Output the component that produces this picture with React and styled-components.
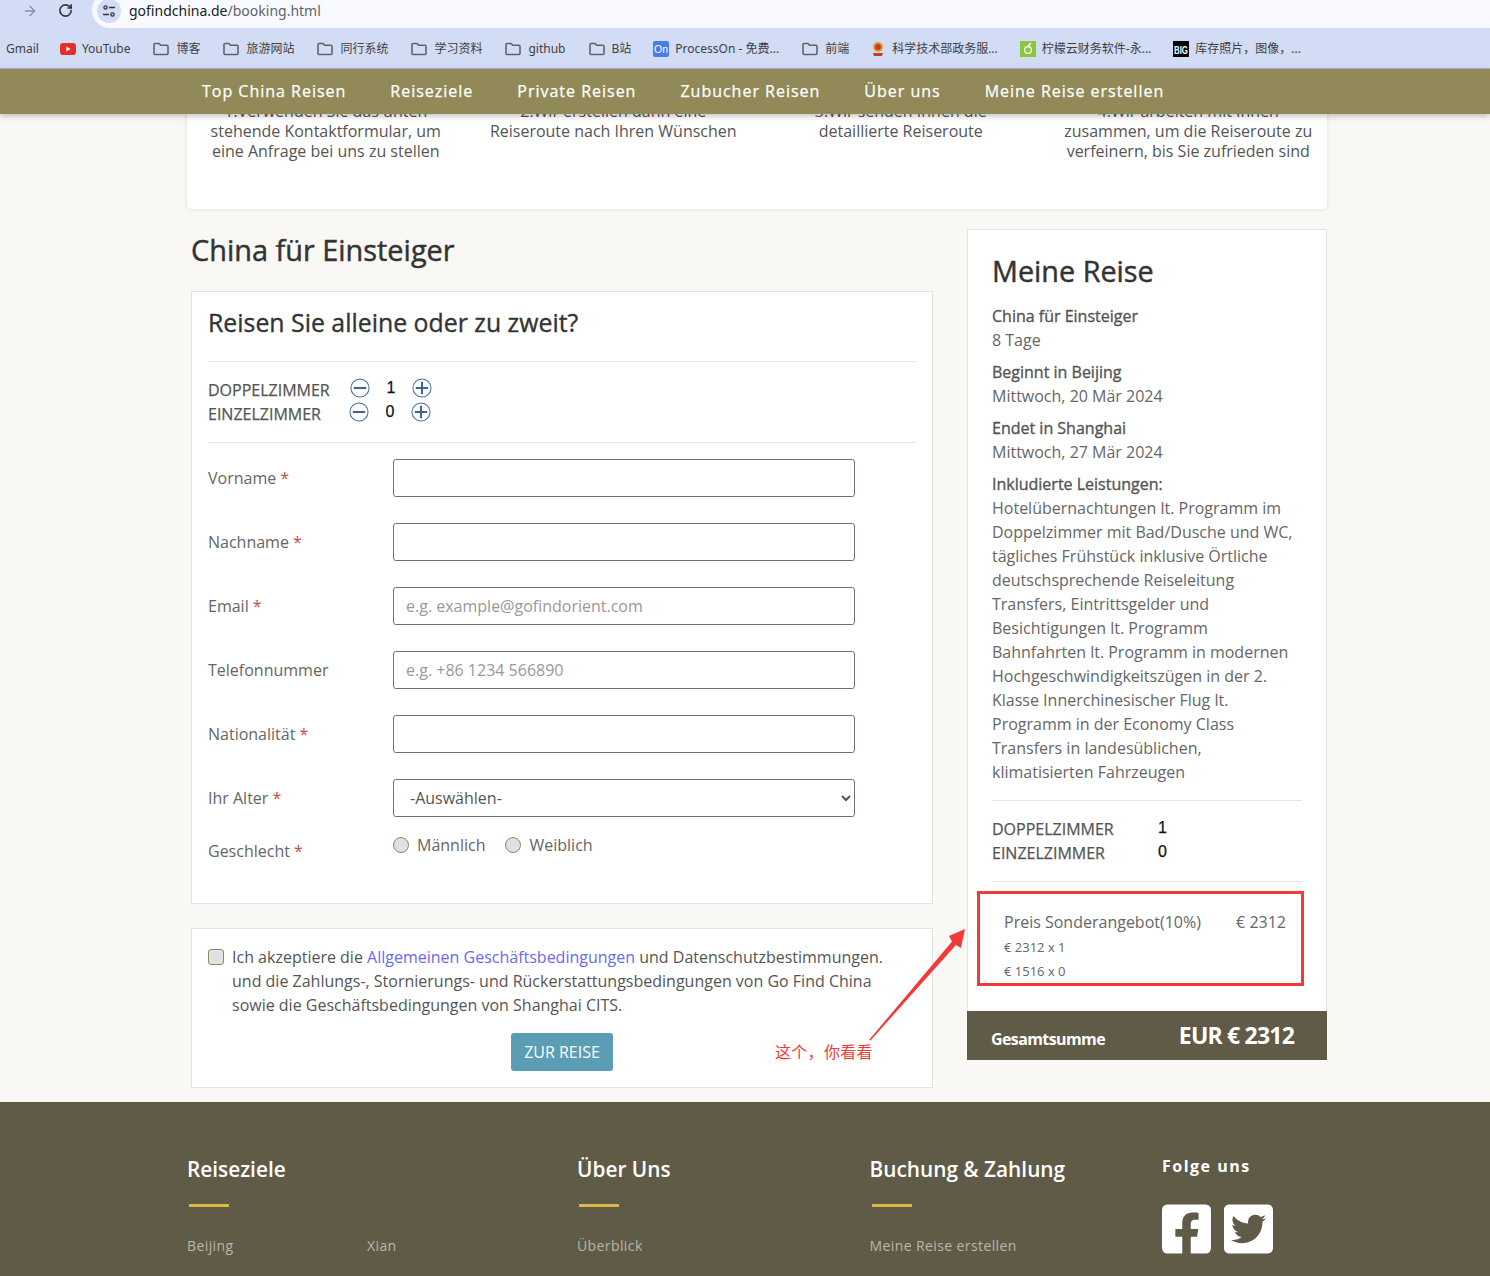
import React from "react";
import styled, { createGlobalStyle } from "styled-components";
import { ArrowRight, RotateCw } from "lucide-react";
import { FaFacebookSquare, FaTwitterSquare } from "react-icons/fa";

const GlobalStyle = createGlobalStyle`
  html, body { margin: 0; padding: 0; background: #f9f8f4; }
  body { font-family: "Open Sans", "Noto Sans CJK SC", sans-serif; color: #555; }
  #root { height: 1276px; overflow: hidden; position: relative; }
  * { box-sizing: border-box; }
`;

const AddressBar = styled.div`
  height: 28px;
  background: #d3dcf5;
  display: flex;
  align-items: flex-start;
  padding-left: 22px;
  gap: 20px;
  svg { flex: none; }
  > svg { margin-top: 3px; }
`;
const UrlPill = styled.div`
  flex: 1;
  height: 36px;
  margin: -8px 0 0 -1px;
  padding: 9px 0 0 37px;
  position: relative;
  background: #f8faff;
  border-radius: 18px 0 0 18px;
  font: 14px/20px "Noto Sans", sans-serif;
  color: #202124;
  span { color: #5f6368; }
`;
const TuneBadge = styled.div`
  position: absolute;
  left: 5px;
  top: 7px;
  width: 24px;
  height: 24px;
  border-radius: 50%;
  background: #d3dcf5;
  display: flex;
  align-items: center;
  justify-content: center;
`;
const BookmarkBar = styled.div`
  height: 41px;
  background: #d3dcf5;
  border-bottom: 1px solid #aeb5cb;
  display: flex;
  align-items: center;
  gap: 22px;
  padding: 2px 0 0 6px;
  font: 12px/16px "Noto Sans", "Noto Sans CJK SC", sans-serif;
  color: #3c4043;
`;
const Bookmark = styled.div`
  display: flex;
  align-items: center;
  gap: ${(p) => p.$gap || 6}px;
  margin-right: ${(p) => p.$trim || 0}px;
  white-space: nowrap;
`;
const NavBar = styled.nav`
  position: relative;
  z-index: 5;
  height: 45px;
  background: #918a58;
  box-shadow: 0 2px 6px rgba(0, 0, 0, 0.25);
  display: flex;
  align-items: center;
  gap: 44px;
  padding: 0 0 2px 202px;
`;
const NavItem = styled.a`
  color: #fff;
  font-size: 16px;
  letter-spacing: 0.99px;
  -webkit-text-stroke: 0.25px #fff;
`;
const Container = styled.div`
  width: 1140px;
  margin-left: 187px;
`;
const StepsCard = styled.section`
  height: 95px;
  background: #fff;
  border-radius: 0 0 5px 5px;
  box-shadow: 0 0 4px rgba(0, 0, 0, 0.12);
  overflow: hidden;
  display: grid;
  grid-template-columns: repeat(4, 287.5px);
  justify-content: center;
`;
const Step = styled.p`
  margin: -13px auto 0;
  width: 250px;
  text-align: center;
  font-size: 16px;
  line-height: 20px;
  color: #555;
`;
const Columns = styled.div`
  display: flex;
  align-items: flex-start;
  margin-top: 20px;
  padding-left: 4px;
  gap: 34px;
`;
const LeftColumn = styled.div`
  width: 742px;
`;
const PageTitle = styled.h1`
  margin: 0;
  height: 62px;
  font-size: 28.9px;
  line-height: 42px;
  font-weight: 400;
  -webkit-text-stroke: 0.45px #333;
  color: #333;
`;
const Card = styled.section`
  background: #fff;
  border: 1px solid #e3e3e3;
  padding: ${(p) => p.$padding};
  margin-bottom: ${(p) => p.$bottom || 0}px;
  height: ${(p) => p.$height}px;
`;
const CardTitle = styled.h2`
  margin: 0;
  height: 56px;
  font-size: 24.85px;
  line-height: 34px;
  font-weight: 400;
  -webkit-text-stroke: 0.35px #333;
  color: #333;
`;
const Rule = styled.hr`
  border: 0;
  border-top: 1px solid #e6e6e6;
  margin: ${(p) => p.$top || 0}px 0 0;
`;
const RoomList = styled.div`
  padding: 14px 0 18px;
`;
const RoomRow = styled.div`
  height: 24px;
  display: flex;
  align-items: center;
`;
const RoomLabel = styled.span`
  width: ${(p) => p.$width}px;
  font-size: 16px;
  -webkit-text-stroke: 0.25px #555;
  color: #555;
  padding-top: 4px;
`;
const RoomCount = styled.span`
  width: 42px;
  text-align: center;
  font: 16px "Liberation Sans", sans-serif;
  -webkit-text-stroke: 0.25px #111;
  color: #111;
`;
const Field = styled.div`
  display: flex;
  align-items: ${(p) => (p.$top ? "flex-start" : "center")};
  height: ${(p) => p.$height || 38}px;
  margin-top: ${(p) => p.$first || 0}px;
  margin-bottom: ${(p) => p.$bottom ?? 26}px;
`;
const FieldLabel = styled.label`
  width: 185px;
  flex: none;
  font-size: 16px;
  color: #666;
  padding-top: ${(p) => p.$pad || 0}px;
  em { color: #c0504d; font-style: normal; }
`;
const TextInput = styled.input`
  width: 462px;
  height: 38px;
  border: 1px solid #6c757d;
  border-radius: 3px;
  padding: 0 12px;
  font: 16px "Open Sans", sans-serif;
  background: #fff;
  &::placeholder { color: #999; opacity: 1; }
`;
const AgeSelect = styled.select`
  width: 462px;
  height: 38px;
  border: 1px solid #6c757d;
  border-radius: 3px;
  padding: 0 12px;
  font: 16px "Open Sans", sans-serif;
  color: #555;
  background: #fff;
`;
const RadioGroup = styled.div`
  display: flex;
  align-items: center;
  gap: 20px;
  height: 24px;
`;
const RadioLabel = styled.label`
  display: flex;
  align-items: center;
  gap: 8px;
  font-size: 16px;
  color: #666;
`;
const Radio = styled.input`
  appearance: none;
  margin: 0;
  width: 16px;
  height: 16px;
  border-radius: 50%;
  border: 1px solid #918a58;
  background: #dfe1e6;
`;
const Agreement = styled.div`
  display: flex;
  gap: 8px;
  font-size: 16px;
  line-height: 24px;
  color: #555;
  a { color: #6a6af0; }
`;
const Check = styled.input`
  appearance: none;
  flex: none;
  margin: 4px 0 0;
  width: 16px;
  height: 16px;
  border-radius: 3px;
  border: 1px solid #918a58;
  background: #dfe1e6;
`;
const SubmitRow = styled.div`
  display: flex;
  justify-content: center;
  margin-top: 16px;
`;
const SubmitButton = styled.button`
  width: 102px;
  height: 38px;
  border: 0;
  border-radius: 3px;
  background: #5a9db5;
  color: #fff;
  font: 16px "Open Sans", sans-serif;
`;
const SidePanel = styled.aside`
  width: 360px;
  background: #fff;
  border: 1px solid #e3e3e3;
  border-bottom: 0;
`;
const SideBody = styled.div`
  padding: 19px 24px 25px;
`;
const SideTitle = styled.h2`
  margin: 0 0 11px;
  font-size: 28.8px;
  line-height: 44px;
  font-weight: 400;
  -webkit-text-stroke: 0.45px #333;
  color: #333;
`;
const InfoBlock = styled.div`
  font-size: 16px;
  line-height: 24px;
  color: #666;
  margin-bottom: 8px;
  strong { display: block; font-weight: 400; color: #555; -webkit-text-stroke: 0.35px #555; }
`;
const SummaryRooms = styled.div`
  padding: 16px 0;
`;
const SummaryRow = styled.div`
  display: flex;
  height: 24px;
  font-size: 16px;
  color: #555;
  span { width: 166px; padding-top: 1px; -webkit-text-stroke: 0.25px #555; }
  b { padding-top: 2px; font: 16px "Liberation Sans", sans-serif; color: #111; -webkit-text-stroke: 0.25px #111; }
`;
const PriceBox = styled.div`
  margin: 9px -2px 0 -15px;
  height: 95px;
  border: 3px solid #f13a3a;
  padding: 16px 15px 0 24px;
`;
const PriceRow = styled.div`
  display: flex;
  justify-content: space-between;
  font-size: 16px;
  line-height: 24px;
  margin-bottom: 1px;
  color: #666;
`;
const PriceNote = styled.div`
  font-size: 13px;
  line-height: 24px;
  color: #666;
`;
const TotalBar = styled.div`
  height: 49px;
  margin: 0 -1px;
  background: #5f5b47;
  color: #fff;
  display: flex;
  justify-content: space-between;
  align-items: center;
  padding: 0 33px 0 24px;
`;
const TotalLabel = styled.span`
  font-size: 16px;
  font-weight: 700;
  padding-top: 6px;
  letter-spacing: -0.6px;
`;
const TotalValue = styled.span`
  font-size: 23px;
  font-weight: 700;
  padding-bottom: 1px;
  letter-spacing: -0.8px;
`;
const Footer = styled.footer`
  margin-top: 14px;
  height: 174px;
  background: #5f5b47;
  padding: 52px 0 0 187px;
  display: grid;
  grid-template-columns: 390px 292.5px 292.5px 1fr;
`;
const FooterTitle = styled.h3`
  margin: 0;
  font-size: 20.8px;
  line-height: 30px;
  font-weight: 600;
  color: #fff;
`;
const FooterBar = styled.div`
  width: 40px;
  height: 3px;
  margin: 20px 0 29px 2px;
  background: #d9b94a;
`;
const FooterLinks = styled.div`
  display: grid;
  grid-template-columns: ${(p) => p.$cols || "1fr"};
  font-size: 14px;
  line-height: 20px;
  letter-spacing: 0.4px;
  color: #b9b7a8;
`;
const FollowTitle = styled.h3`
  margin: -3px 0 0;
  font-size: 16px;
  line-height: 30px;
  font-weight: 700;
  letter-spacing: 1.5px;
  color: #fff;
`;
const SocialRow = styled.div`
  display: flex;
  gap: 13px;
  margin-top: 20px;
  color: #fff;
  svg { display: block; width: 49px; height: 56px; }
`;
const Annotation = styled.svg`
  position: absolute;
  left: 860px;
  top: 920px;
`;
const AnnotationText = styled.span`
  position: absolute;
  left: 775px;
  top: 1040px;
  font: 16px/22px "Noto Sans CJK SC", sans-serif;
  letter-spacing: 0.3px;
  color: #f13a3a;
`;

const Folder = () => (
  <svg width="18" height="18" viewBox="0 0 18 18" fill="none" stroke="#5f6368" strokeWidth="1.6">
    <path d="M2 4.5a1 1 0 0 1 1-1h4l1.6 1.7H15a1 1 0 0 1 1 1v7.3a1 1 0 0 1-1 1H3a1 1 0 0 1-1-1z" />
  </svg>
);

const Round = ({ plus }) => (
  <svg width="20" height="20" viewBox="0 0 21 21" fill="none">
    <circle cx="10.5" cy="10.5" r="9.5" stroke="#4a71a6" strokeWidth="1.1" />
    <path d={plus ? "M4 10.5h13M10.5 4v13" : "M4 10.5h13"} stroke="#3d659b" strokeWidth="2.2" />
  </svg>
);

const Counter = ({ label, width, value }) => (
  <RoomRow>
    <RoomLabel $width={width}>{label}</RoomLabel>
    <Round />
    <RoomCount>{value}</RoomCount>
    <Round plus />
  </RoomRow>
);

const Req = () => <em>*</em>;

const bookmarks = ["博客", "旅游网站", "同行系统", "学习资料", "github", "B站"];

export default function App() {
  return (
    <>
      <GlobalStyle />
      <AddressBar>
        <ArrowRight size={16} strokeWidth={2} color="#8a8fa0" />
        <RotateCw size={15} strokeWidth={2.6} color="#333" />
        <UrlPill>
          <TuneBadge>
            <svg width="14" height="14" viewBox="0 0 14 14" fill="none" stroke="#333" strokeWidth="1.3">
              <circle cx="3.5" cy="3.5" r="1.6" />
              <path d="M7 3.5h6M1 10.5h6" />
              <circle cx="10.5" cy="10.5" r="1.6" />
            </svg>
          </TuneBadge>
          gofindchina.de<span>/booking.html</span>
        </UrlPill>
      </AddressBar>
      <BookmarkBar>
        <Bookmark $trim={-1}>Gmail</Bookmark>
        <Bookmark>
          <svg width="16" height="12" viewBox="0 0 16 12">
            <rect width="16" height="12" rx="3" fill="#e62d27" />
            <path d="M6.4 3.5v5L10.6 6z" fill="#fff" />
          </svg>
          YouTube
        </Bookmark>
        {bookmarks.map((name) => (
          <Bookmark key={name}>
            <Folder />
            {name}
          </Bookmark>
        ))}
        <Bookmark>
          <svg width="16" height="16" viewBox="0 0 16 16">
            <rect width="16" height="16" rx="2" fill="#4a7be8" />
            <text x="8" y="12" textAnchor="middle" fontSize="10.5" fontFamily="Liberation Sans" fill="#fff">On</text>
          </svg>
          ProcessOn - 免费...
        </Bookmark>
        <Bookmark>
          <Folder />
          前端
        </Bookmark>
        <Bookmark $gap={7}>
          <svg width="14" height="16" viewBox="0 0 14 16">
            <circle cx="7" cy="6" r="5" fill="#d9a12f" />
            <circle cx="7" cy="6" r="3" fill="#cc3a22" />
            <path d="M2 12h10l-1 3H3z" fill="#cc3a22" />
          </svg>
          科学技术部政务服...
        </Bookmark>
        <Bookmark>
          <svg width="16" height="16" viewBox="0 0 16 16">
            <rect width="16" height="16" fill="#8cc63f" />
            <circle cx="8" cy="9" r="3.4" fill="none" stroke="#fff" strokeWidth="1.3" />
            <path d="M8 5l3-3" stroke="#fff" strokeWidth="1.2" />
          </svg>
          柠檬云财务软件-永...
        </Bookmark>
        <Bookmark>
          <svg width="16" height="16" viewBox="0 0 16 16">
            <rect width="16" height="16" fill="#000" />
            <text x="8" y="12.5" textAnchor="middle" fontSize="11" fontWeight="700" fontFamily="Liberation Sans" fill="#fff" textLength="14" lengthAdjust="spacingAndGlyphs">BIG</text>
          </svg>
          库存照片，图像，...
        </Bookmark>
      </BookmarkBar>
      <NavBar>
        <NavItem>Top China Reisen</NavItem>
        <NavItem>Reiseziele</NavItem>
        <NavItem>Private Reisen</NavItem>
        <NavItem>Zubucher Reisen</NavItem>
        <NavItem>Über uns</NavItem>
        <NavItem>Meine Reise erstellen</NavItem>
      </NavBar>
      <Container>
        <StepsCard>
          <Step>1.Verwenden Sie das unten stehende Kontaktformular, um eine Anfrage bei uns zu stellen</Step>
          <Step>2.Wir erstellen dann eine Reiseroute nach Ihren Wünschen</Step>
          <Step>3.Wir senden Ihnen die detaillierte Reiseroute</Step>
          <Step>4.Wir arbeiten mit Ihnen zusammen, um die Reiseroute zu verfeinern, bis Sie zufrieden sind</Step>
        </StepsCard>
        <Columns>
          <LeftColumn>
            <PageTitle>China für Einsteiger</PageTitle>
            <Card $padding="13px 16px 0" $height={613} $bottom={24}>
              <CardTitle>Reisen Sie alleine oder zu zweit?</CardTitle>
              <Rule />
              <RoomList>
                <Counter label="DOPPELZIMMER" width={142} value="1" />
                <Counter label="EINZELZIMMER" width={141} value="0" />
              </RoomList>
              <Rule />
              <Field $first={16}>
                <FieldLabel>Vorname <Req /></FieldLabel>
                <TextInput />
              </Field>
              <Field>
                <FieldLabel>Nachname <Req /></FieldLabel>
                <TextInput />
              </Field>
              <Field>
                <FieldLabel>Email <Req /></FieldLabel>
                <TextInput placeholder="e.g. example@gofindorient.com" />
              </Field>
              <Field>
                <FieldLabel>Telefonnummer</FieldLabel>
                <TextInput placeholder="e.g. +86 1234 566890" />
              </Field>
              <Field>
                <FieldLabel>Nationalität <Req /></FieldLabel>
                <TextInput />
              </Field>
              <Field $bottom={16}>
                <FieldLabel>Ihr Alter <Req /></FieldLabel>
                <AgeSelect defaultValue="">
                  <option value="">-Auswählen-</option>
                </AgeSelect>
              </Field>
              <Field $top $height={50} $bottom={0}>
                <FieldLabel $pad={7}>Geschlecht <Req /></FieldLabel>
                <RadioGroup>
                  <RadioLabel><Radio type="radio" name="sex" />Männlich</RadioLabel>
                  <RadioLabel><Radio type="radio" name="sex" />Weiblich</RadioLabel>
                </RadioGroup>
              </Field>
            </Card>
            <Card $padding="16px 16px 0" $height={160}>
              <Agreement>
                <Check type="checkbox" />
                <div>
                  Ich akzeptiere die <a>Allgemeinen Geschäftsbedingungen</a> und Datenschutzbestimmungen.
                  <br />und die Zahlungs-, Stornierungs- und Rückerstattungsbedingungen von Go Find China
                  <br />sowie die Geschäftsbedingungen von Shanghai CITS.
                </div>
              </Agreement>
              <SubmitRow>
                <SubmitButton>ZUR REISE</SubmitButton>
              </SubmitRow>
            </Card>
          </LeftColumn>
          <SidePanel>
            <SideBody>
              <SideTitle>Meine Reise</SideTitle>
              <InfoBlock><strong>China für Einsteiger</strong>8 Tage</InfoBlock>
              <InfoBlock><strong>Beginnt in Beijing</strong>Mittwoch, 20 Mär 2024</InfoBlock>
              <InfoBlock><strong>Endet in Shanghai</strong>Mittwoch, 27 Mär 2024</InfoBlock>
              <InfoBlock>
                <strong>Inkludierte Leistungen:</strong>
                Hotelübernachtungen lt. Programm im Doppelzimmer mit Bad/Dusche und WC, tägliches Frühstück inklusive Örtliche deutschsprechende Reiseleitung Transfers, Eintrittsgelder und Besichtigungen lt. Programm Bahnfahrten lt. Programm in modernen Hochgeschwindigkeitszügen in der 2. Klasse Innerchinesischer Flug lt. Programm in der Economy Class Transfers in landesüblichen, klimatisierten Fahrzeugen
              </InfoBlock>
              <Rule $top={16} />
              <SummaryRooms>
                <SummaryRow><span>DOPPELZIMMER</span><b>1</b></SummaryRow>
                <SummaryRow><span>EINZELZIMMER</span><b>0</b></SummaryRow>
              </SummaryRooms>
              <Rule />
              <PriceBox>
                <PriceRow><span>Preis Sonderangebot(10%)</span><span>€ 2312</span></PriceRow>
                <PriceNote>€ 2312 x 1</PriceNote>
                <PriceNote>€ 1516 x 0</PriceNote>
              </PriceBox>
            </SideBody>
            <TotalBar>
              <TotalLabel>Gesamtsumme</TotalLabel>
              <TotalValue>EUR € 2312</TotalValue>
            </TotalBar>
          </SidePanel>
        </Columns>
      </Container>
      <Footer>
        <div>
          <FooterTitle>Reiseziele</FooterTitle>
          <FooterBar />
          <FooterLinks $cols="180px 1fr">
            <span>Beijing</span>
            <span>Xian</span>
          </FooterLinks>
        </div>
        <div>
          <FooterTitle>Über Uns</FooterTitle>
          <FooterBar />
          <FooterLinks>Überblick</FooterLinks>
        </div>
        <div>
          <FooterTitle>Buchung &amp; Zahlung</FooterTitle>
          <FooterBar />
          <FooterLinks>Meine Reise erstellen</FooterLinks>
        </div>
        <div>
          <FollowTitle>Folge uns</FollowTitle>
          <SocialRow>
            <FaFacebookSquare />
            <FaTwitterSquare />
          </SocialRow>
        </div>
      </Footer>
      <Annotation width="120" height="130" viewBox="0 0 120 130">
        <path d="M105 9 L89 16 L92 21.5 L9 120 L10.5 120.5 L96 25 L101 28z" fill="#f33a3a" />
      </Annotation>
      <AnnotationText>这个，你看看</AnnotationText>
    </>
  );
}
